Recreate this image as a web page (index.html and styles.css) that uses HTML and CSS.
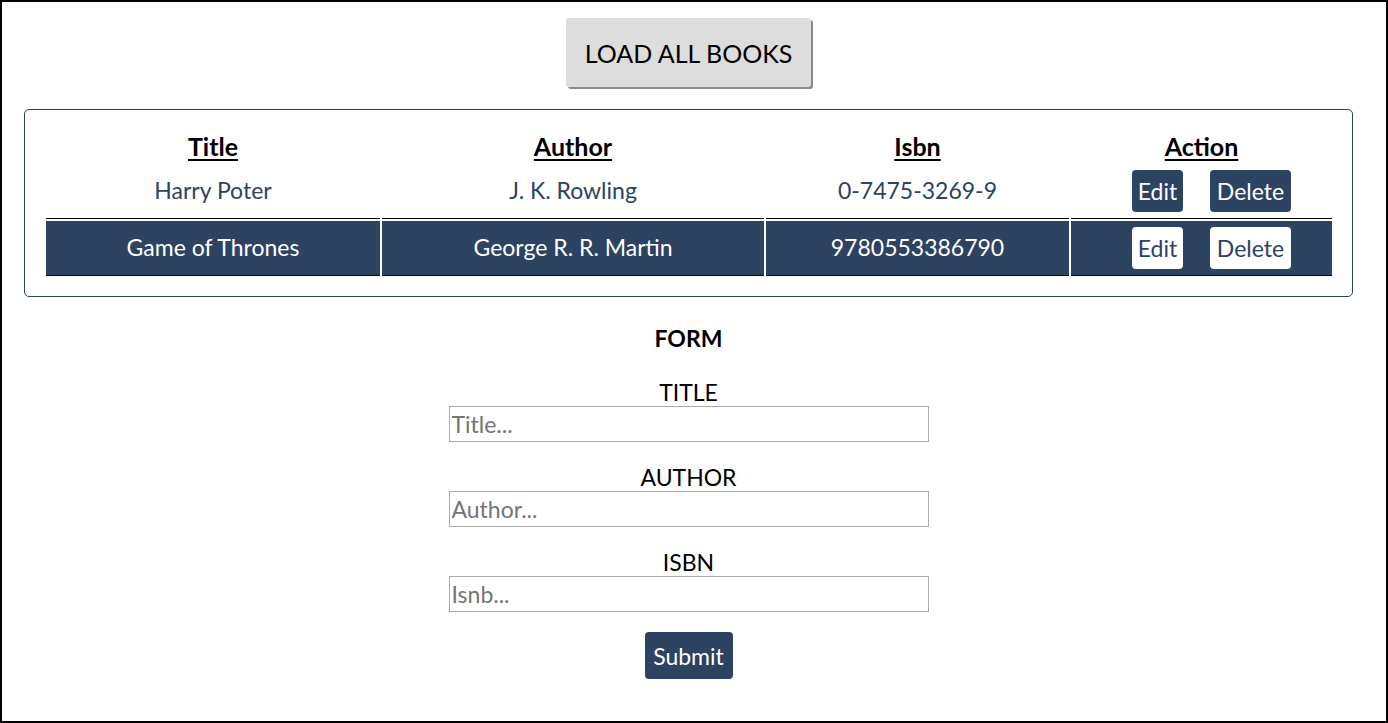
FILE: index.html
```html
<!DOCTYPE html>
<html lang="en">
<head>
<meta charset="utf-8">
<title>Books</title>
<link rel="stylesheet" href="styles.css">
</head>
<body>
<div class="frame">
  <div class="column">
    <button class="load-btn">LOAD ALL BOOKS</button>

    <div class="table-card">
      <table class="books">
        <thead>
          <tr>
            <th class="c-title">Title</th>
            <th class="c-author">Author</th>
            <th class="c-isbn">Isbn</th>
            <th class="c-action">Action</th>
          </tr>
        </thead>
        <tbody>
          <tr>
            <td>Harry Poter</td>
            <td>J. K. Rowling</td>
            <td>0-7475-3269-9</td>
            <td class="actions">
              <div class="action-group">
                <button class="btn btn-edit">Edit</button>
                <button class="btn btn-delete">Delete</button>
              </div>
            </td>
          </tr>
          <tr class="selected">
            <td>Game of Thrones</td>
            <td>George R. R. Martin</td>
            <td>9780553386790</td>
            <td class="actions">
              <div class="action-group">
                <button class="btn btn-edit">Edit</button>
                <button class="btn btn-delete">Delete</button>
              </div>
            </td>
          </tr>
        </tbody>
      </table>
    </div>

    <form class="book-form">
      <h2 class="form-heading">FORM</h2>
      <div class="field">
        <label class="field-label" for="title">TITLE</label>
        <input class="field-input" id="title" type="text" placeholder="Title...">
      </div>
      <div class="field">
        <label class="field-label" for="author">AUTHOR</label>
        <input class="field-input" id="author" type="text" placeholder="Author...">
      </div>
      <div class="field">
        <label class="field-label" for="isbn">ISBN</label>
        <input class="field-input" id="isbn" type="text" placeholder="Isnb...">
      </div>
      <button class="btn submit-btn" type="button">Submit</button>
    </form>
  </div>
</div>
</body>
</html>
```

FILE: styles.css
```css
* {
  box-sizing: border-box;
}

html, body {
  margin: 0;
  padding: 0;
  background: #fff;
}

body {
  font-family: "Lato", "Open Sans", sans-serif;
  font-size: 23px;
  color: #000;
}

.frame {
  height: 723px;
  width: 1388px;
  border: 2px solid #000;
  padding: 16px 0 0 22px;
  overflow: hidden;
}

.column {
  width: 1329px;
  display: flex;
  flex-direction: column;
  align-items: center;
}

.load-btn {
  width: 245px;
  height: 69px;
  background: #dddddd;
  border: none;
  border-radius: 3px;
  box-shadow: 2px 2px 0 #8a8a8a;
  font-family: inherit;
  font-size: 25px;
  color: #000;
  padding: 0;
}

.table-card {
  margin-top: 22px;
  width: 1329px;
  border: 1px solid #2c4361;
  border-radius: 5px;
  padding: 18px 19px;
}

.books {
  width: 1290px;
  border-collapse: separate;
  border-spacing: 2px;
}

.books th {
  height: 32px;
  padding: 0;
  font-size: 25px;
  font-weight: 700;
  text-decoration: underline;
  text-decoration-thickness: 2px;
  text-underline-offset: 3px;
  color: #000;
  vertical-align: middle;
}

.c-title { width: 334px; }
.c-author { width: 382px; }
.c-isbn { width: 303px; }
.c-action { width: 261px; }

.books td {
  height: 55px;
  padding: 0 0 2px;
  text-align: center;
  vertical-align: middle;
  color: #2c4361;
  border-bottom: 1px solid #000;
}

.books tr.selected td {
  background: #2c4361;
  color: #fff;
}

.books td.actions {
  padding: 0 0 0 20px;
}

.action-group {
  display: flex;
  justify-content: center;
  gap: 27px;
}

.btn {
  height: 42px;
  padding: 0 5px;
  border: none;
  border-radius: 4px;
  background: #2c4361;
  color: #fff;
  font-family: inherit;
  font-size: 23px;
}

.btn-edit { width: 51px; }
.btn-delete { width: 81px; }

.books tr.selected .btn {
  background: #fff;
  color: #2c4361;
}

.book-form {
  display: flex;
  flex-direction: column;
  align-items: center;
}

.form-heading {
  margin: 29px 0 30px;
  font-size: 23px;
  line-height: 25px;
  font-weight: 700;
}

.field {
  display: flex;
  flex-direction: column;
  align-items: center;
  margin-bottom: 24px;
}

.field:last-of-type {
  margin-bottom: 20px;
}

.field-label {
  line-height: 23px;
  margin-bottom: 2px;
  font-size: 23px;
}

.field-input {
  width: 480px;
  height: 36px;
  border: 1px solid #a9a9a9;
  padding: 0 2px;
  font-family: inherit;
  font-size: 23px;
  outline: none;
}

.field-input::placeholder {
  color: #757575;
}

.submit-btn {
  width: 88px;
  height: 47px;
  padding: 0;
}
```
